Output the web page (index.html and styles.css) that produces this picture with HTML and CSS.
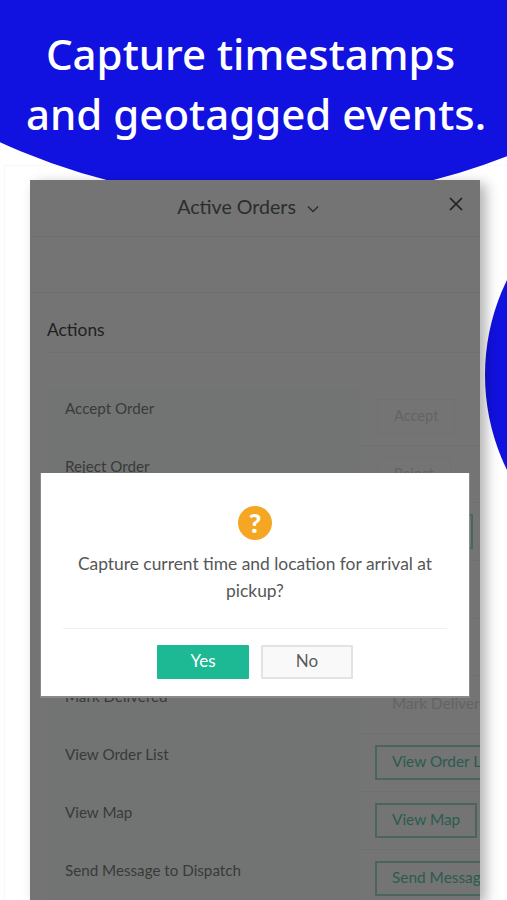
FILE: index.html
```html
<!DOCTYPE html>
<html lang="en">
<head>
<meta charset="utf-8">
<title>Active Orders</title>
<link rel="stylesheet" href="styles.css">
</head>
<body>
<main class="screen">
  <div class="sheet-edge"></div>
  <div class="blob blob-top"></div>
  <div class="blob blob-right"></div>

  <h1 class="headline"><span class="line-one">Capture timestamps</span><span class="line-two">and geotagged events.</span></h1>

  <section class="app">
    <header class="app-bar">
      <div class="app-title">Active Orders
        <svg class="chevron" viewBox="0 0 12 8" width="12" height="8"><path d="M1 1.5 6 6.5 11 1.5" fill="none" stroke="#2b2d2d" stroke-width="1.3"/></svg>
      </div>
      <svg class="close" viewBox="0 0 14 14" width="14" height="14"><path d="M1 1 13 13M13 1 1 13" fill="none" stroke="#1f2020" stroke-width="1.7"/></svg>
    </header>
    <div class="toolbar"></div>
    <h2 class="section-title">Actions</h2>
    <div class="table">
      <div class="row"><div class="label">Accept Order</div><div class="action"><span class="btn btn-off">Accept</span></div></div>
      <div class="row"><div class="label">Reject Order</div><div class="action"><span class="btn btn-off">Reject</span></div></div>
      <div class="row"><div class="label"></div><div class="action"><span class="btn btn-blank"></span></div></div>
      <div class="row"><div class="label"></div><div class="action"></div></div>
      <div class="row"><div class="label"></div><div class="action"></div></div>
      <div class="row"><div class="label">Mark Delivered</div><div class="action"><span class="btn btn-ghost">Mark Delivered</span></div></div>
      <div class="row"><div class="label">View Order List</div><div class="action"><span class="btn">View Order List</span></div></div>
      <div class="row"><div class="label">View Map</div><div class="action"><span class="btn">View Map</span></div></div>
      <div class="row"><div class="label">Send Message to Dispatch</div><div class="action"><span class="btn">Send Message</span></div></div>
    </div>
  </section>

  <div class="dialog">
    <span class="dialog-icon">?</span>
    <p class="dialog-text">Capture current time and location for arrival at pickup?</p>
    <div class="dialog-actions">
      <button class="dbtn dbtn-yes">Yes</button>
      <button class="dbtn dbtn-no">No</button>
    </div>
  </div>
</main>
</body>
</html>
```

FILE: styles.css
```css
* { box-sizing: border-box; }
html, body { margin: 0; padding: 0; background: #fff; }
.screen {
  position: relative;
  width: 507px;
  height: 900px;
  overflow: hidden;
  background: #fff;
  font-family: Lato, "Liberation Sans", sans-serif;
}
.sheet-edge {
  position: absolute;
  left: 4px;
  top: 165px;
  width: 503px;
  height: 735px;
  border-left: 1px solid #f8f8f8;
  border-top: 1px solid #f8f8f8;
}
.blob { position: absolute; border-radius: 50%; background: #1111e0; }
.blob-top { left: -380px; top: -1099px; width: 1300px; height: 1300px; }
.blob-right { left: 485px; top: 159px; width: 432px; height: 432px; }

.headline {
  position: relative;
  margin: 0;
  height: 180px;
  padding-top: 24px;
  text-align: center;
  color: #fff;
  font-family: "Noto Sans", "Open Sans", sans-serif;
  font-size: 42px;
  font-weight: 500;
  line-height: 60px;
  white-space: nowrap;
}
.line-one { display: block; padding-right: 6px; }
.line-two { display: block; padding-left: 5px; }

.app {
  position: relative;
  width: 450px;
  height: 720px;
  margin-left: 30px;
  overflow: hidden;
  background: #747474;
  box-shadow: 6px 4px 12px rgba(0, 0, 0, 0.3);
}
.app-bar {
  position: relative;
  display: flex;
  align-items: center;
  justify-content: center;
  height: 57px;
  border-bottom: 1px solid #6e6e6e;
}
.app-title {
  display: flex;
  align-items: center;
  gap: 11px;
  padding: 0 14px 3px 0;
  color: #2b2d2d;
  font-size: 19.6px;
}
.chevron { margin-top: 5px; }
.close { position: absolute; right: 17px; top: 17px; }
.toolbar { height: 56px; border-bottom: 1px solid #6e6e6e; }
.section-title {
  margin: 0 0 35px 17px;
  height: 60px;
  padding-top: 26px;
  border-bottom: 1px solid #6f6f6f;
  color: #1f2121;
  font-size: 17.4px;
  font-weight: 400;
  line-height: 22px;
}
.table { margin-left: 17px; }
.row {
  display: grid;
  grid-template-columns: 313px 1fr;
  height: 57.7px;
}
.label {
  padding: 10px 0 0 18px;
  background: #727473;
  color: #383a3a;
  font-size: 15.2px;
  line-height: 20px;
}
.action {
  padding: 11px 0 0 15px;
  border-bottom: 1px solid #707070;
  white-space: nowrap;
  overflow: hidden;
}
.btn {
  display: inline-block;
  height: 35px;
  padding: 0 15px;
  border: 2px solid #4a655d;
  color: #2a5c4f;
  font-size: 15.4px;
  line-height: 29px;
}
.btn-off { margin-left: 2px; border: 1px solid #707271; padding: 0 16px; color: #626464; font-size: 14.6px; line-height: 31px; }
.btn-blank { width: 98px; }
.btn-ghost { border-color: transparent; color: #626464; }

.dialog {
  position: absolute;
  left: 41px;
  top: 473px;
  width: 428px;
  height: 223px;
  padding: 33px 22px 0;
  background: #fff;
  box-shadow: 0 1px 0 1px #8a8a8a;
  text-align: center;
}
.dialog-icon {
  display: block;
  width: 34px;
  height: 34px;
  margin: 0 auto;
  border-radius: 50%;
  background: #f5a623;
  color: #fff;
  font-size: 27px;
  font-weight: 900;
  line-height: 34px;
}
.dialog-text {
  margin: 10px 0 0;
  height: 79px;
  border-bottom: 1px solid #f1f1f1;
  color: #555757;
  font-size: 17.4px;
  line-height: 27px;
}
.dialog-actions {
  display: flex;
  justify-content: center;
  gap: 12px;
  margin-top: 16px;
}
.dbtn {
  width: 92px;
  height: 34px;
  padding: 0 0 4px;
  border-radius: 1px;
  font-family: inherit;
  font-size: 17px;
}
.dbtn-yes { border: 0; background: #1db995; color: #fff; }
.dbtn-no { border: 2px solid #e3e3e3; background: #f9f9f9; color: #5c5c5c; }
```
